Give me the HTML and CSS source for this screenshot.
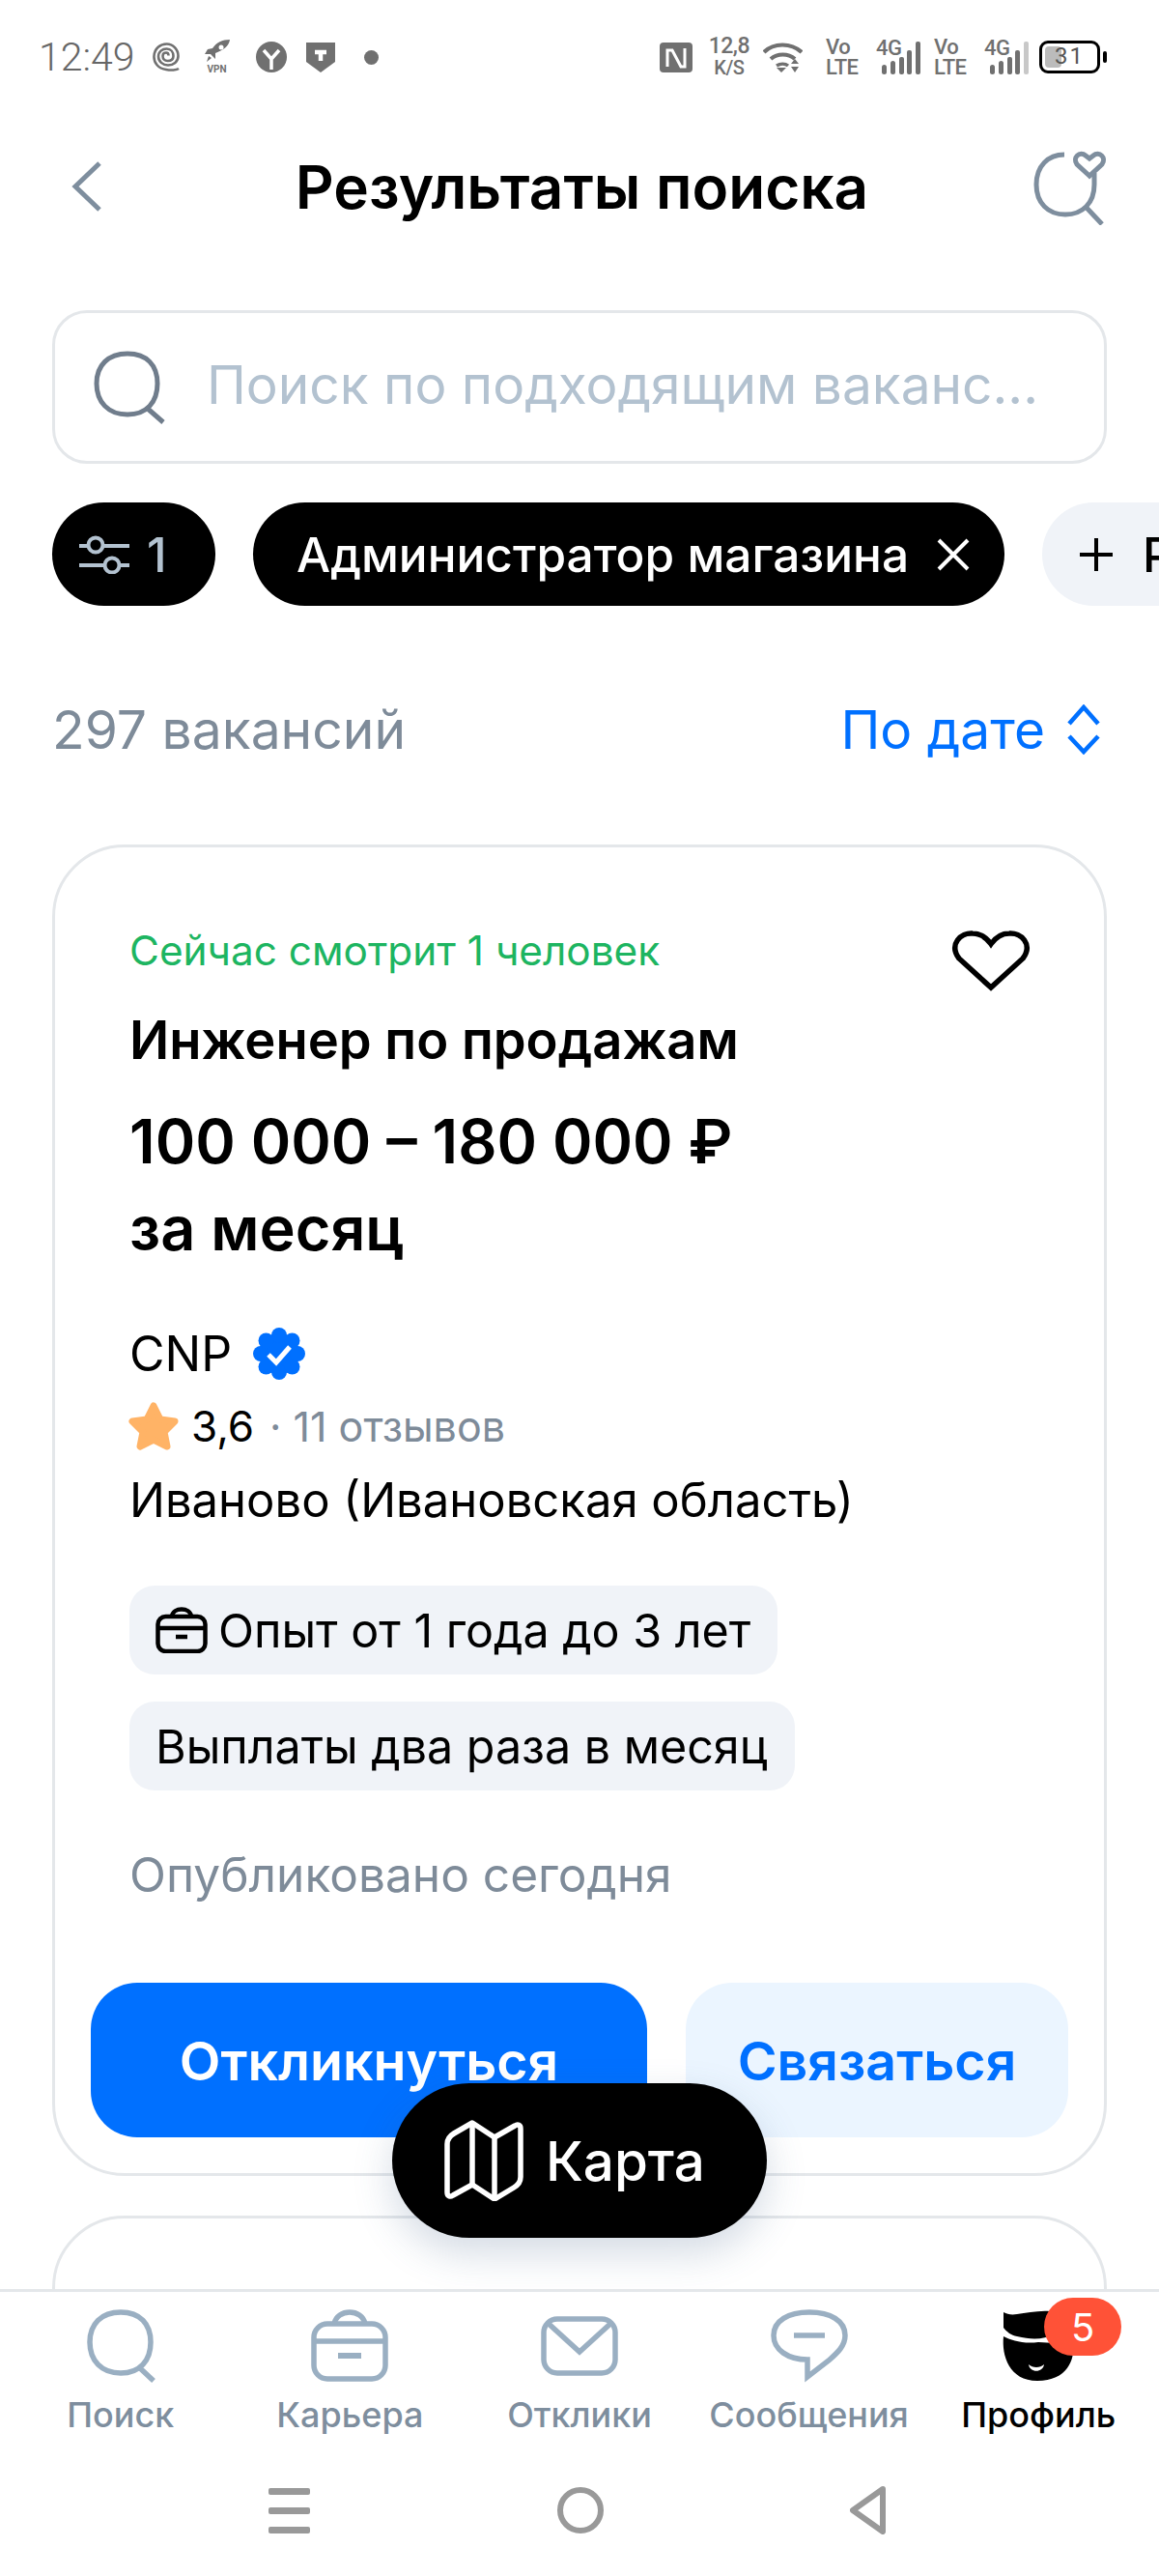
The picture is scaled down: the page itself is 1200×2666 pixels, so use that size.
FILE: index.html
```html
<!DOCTYPE html>
<html lang="ru">
<head>
<meta charset="utf-8">
<title>Результаты поиска</title>
<link rel="stylesheet" href="styles.css">
</head>
<body>
<div class="app">
  <div class="statusbar">
    <div class="st-left">
      <span class="time">12:49</span>
      <svg class="i-swirl" width="28" height="30" viewBox="0 0 28 30" fill="none" stroke="#707070" stroke-width="2.6"><path d="M27 27c-2 1.500-8 2-13 1C6 27 1 21 1.500 14 2 6 8 1.500 14.500 1.500 21 1.500 26.500 7 26.500 14c0 6-5 9.500-10.500 9.500S6 19.500 6 14.500 10 6.500 14.500 6.500s7 3.500 7 7.500-3 5-6 5-5-2-5-5 2-3.500 3.500-3.500 2.500 1 2.500 3"/></svg>
      <span class="vpn">
        <svg width="26" height="24" viewBox="0 0 26 24"><path d="M26 0C18 0 12 3 8 9l-5 1-3 5 6 0 5 5 0-6C19 11 25 7 26 0z" fill="#707070"/><circle cx="17" cy="8" r="2.500" fill="#fff"/><path d="M4 17l3 2-5 4z" fill="#707070"/></svg>
        <span class="vpn-t">VPN</span>
      </span>
      <svg width="32" height="32" viewBox="0 0 32 32"><circle cx="16" cy="16" r="16" fill="#707070"/><path d="M8 9l8 9 8-9M16 18v11" fill="none" stroke="#fff" stroke-width="3.500"/></svg>
      <svg width="30" height="32" viewBox="0 0 30 32"><path d="M0 1h30v20L15 32 0 21z" fill="#707070"/><path d="M9 11h12M15 11v9" stroke="#fff" stroke-width="4.500" fill="none"/></svg>
      <span class="dot"></span>
    </div>
    <div class="st-right">
      <svg width="34" height="31" viewBox="0 0 34 31"><rect width="34" height="31" rx="4" fill="#707070"/><path d="M8 25V8h5l9 17h4V6" fill="none" stroke="#fff" stroke-width="3"/></svg>
      <span class="speed"><b>12,8</b><b class="s2">K/S</b></span>
      <svg class="i-wifi" width="41" height="32" viewBox="0 0 41 32" fill="none" stroke="#707070" stroke-width="4.200"><path d="M1 11C11 1 29 1 40 11M8 18c7-6 18-6 25 0"/><path d="M14 25c4-2.500 9-2.500 12 0" stroke-width="3.500"/><path d="M14 27h10l-5 5zM29 23l4-5 4 5zM29 26h8l-4 6z" fill="#707070" stroke="none"/></svg>
      <span class="volte"><b>Vo</b><b>LTE</b></span>
      <span class="net"><b class="g4">4G</b>
        <svg width="40" height="36" viewBox="0 0 40 36" fill="#707070"><rect x="0" y="24" width="5" height="10" rx="2.500"/><rect x="9" y="20" width="5" height="14" rx="2.500"/><rect x="18" y="16" width="5" height="18" rx="2"/><rect x="26" y="9" width="5" height="25" rx="2"/><rect x="35" y="0" width="5" height="34" rx="2"/></svg>
      </span>
      <span class="volte v2"><b>Vo</b><b>LTE</b></span>
      <span class="net"><b class="g4">4G</b>
        <svg width="40" height="36" viewBox="0 0 40 36" fill="#707070"><rect x="0" y="24" width="5" height="10" rx="2.500"/><rect x="9" y="20" width="5" height="14" rx="2.500"/><rect x="18" y="16" width="5" height="18" rx="2"/><rect x="26" y="9" width="5" height="25" rx="2"/><rect x="35" y="0" width="5" height="34" rx="2" fill="#c8c8c8"/></svg>
      </span>
      <span class="battery"><span class="batt-fill"></span><span class="batt-t">31</span></span>
      <span class="batt-nub"></span>
    </div>
  </div>

  <header class="header">
    <svg class="h-back" width="34" height="54" viewBox="0 0 34 54" fill="none" stroke="#7e8e9e" stroke-width="5"><path d="M30 3L5 27l25 24"/></svg>
    <h1 class="h-title">Результаты поиска</h1>
    <svg class="h-fav" width="80" height="80" viewBox="0 0 80 80" fill="none" stroke="#7e8e9e" stroke-width="5"><path d="M34 7C17 7 5 19 5 38s12 31 30 31 30-12 30-31V26"/><path d="M57 62l16 17"/><path d="M60 29L47 17c-5-7 3-14 9-9l4 3 4-3c6-5 14 2 9 9z" stroke-width="5"/></svg>
  </header>

  <div class="scroll">
    <div class="search">
      <svg width="76" height="76" viewBox="0 0 76 76" fill="none" stroke="#707d8c" stroke-width="5"><path d="M35 3c20 0 31 12 31 31S55 66 35 66 3 53 3 34 15 3 35 3z"/><path d="M56 60l16 14"/></svg>
      <span class="search-ph">Поиск по подходящим ваканс...</span>
    </div>

    <div class="chips">
      <div class="chip chip-dark chip-filter">
        <svg width="52" height="40" viewBox="0 0 52 40" fill="none" stroke="#b3c2d0" stroke-width="4"><path d="M0 11h9M25 11h27M0 31h26M42 31h10"/><circle cx="17" cy="10" r="7.500"/><circle cx="34" cy="31" r="7.500"/></svg>
        <span>1</span>
      </div>
      <div class="chip chip-dark chip-role">
        <span>Администратор магазина</span>
        <svg width="34" height="34" viewBox="0 0 34 34" fill="none" stroke="#fff" stroke-width="4"><path d="M2 2l30 30M32 2L2 32"/></svg>
      </div>
      <div class="chip chip-light">
        <svg width="36" height="36" viewBox="0 0 36 36" fill="none" stroke="#000" stroke-width="4"><path d="M18 1v34M1 18h34"/></svg>
        <span>Регион</span>
      </div>
    </div>

    <div class="meta">
      <span class="count">297 вакансий</span>
      <span class="sort">По дате
        <svg width="36" height="52" viewBox="0 0 36 52" fill="none" stroke="#0070ff" stroke-width="4.500"><path d="M3 20L18 3l15 17M3 33l15 16 15-16"/></svg>
      </span>
    </div>

    <article class="card">
      <div class="viewers">Сейчас смотрит 1 человек</div>
      <svg class="fav" width="82" height="64" viewBox="0 0 82 64" fill="none" stroke="#000" stroke-width="5.500"><path d="M41 60L8 30C-3 15 10 3 22 4c8 0 14 4 19 11C46 8 52 4 60 4c12-1 25 11 14 26z"/></svg>
      <h2 class="job">Инженер по продажам</h2>
      <div class="salary">100 000 – 180 000 ₽<br>за месяц</div>
      <div class="company">CNP
        <svg width="54" height="54" viewBox="0 0 54 54"><g fill="#0070ff"><circle cx="27" cy="27" r="21"/><circle cx="27" cy="8" r="8"/><circle cx="27" cy="46" r="8"/><circle cx="8" cy="27" r="8"/><circle cx="46" cy="27" r="8"/><circle cx="13.500" cy="13.500" r="8"/><circle cx="40.500" cy="13.500" r="8"/><circle cx="13.500" cy="40.500" r="8"/><circle cx="40.500" cy="40.500" r="8"/></g><path d="M16 28l8 8 14-16" fill="none" stroke="#fff" stroke-width="5"/></svg>
      </div>
      <div class="rating">
        <svg width="54" height="52" viewBox="0 0 54 52"><path d="M27 5l7 14 15 2-11 11 3 15-14-7-14 7 3-15L5 21l15-2z" fill="#ffb366" stroke="#ffb366" stroke-width="7" stroke-linejoin="round"/></svg>
        <span class="score">3,6</span>
        <span class="reviews">· 11 отзывов</span>
      </div>
      <div class="city">Иваново (Ивановская область)</div>
      <div class="tags">
        <div class="tag">
          <svg width="54" height="48" viewBox="0 0 54 48" fill="none" stroke="#000" stroke-width="4.500"><path d="M17 10c1-10 19-10 20 0"/><rect x="2.500" y="10" width="49" height="36" rx="8"/><path d="M2.500 22h49M21 31h12"/></svg>
          <span>Опыт от 1 года до 3 лет</span>
        </div>
        <div class="tag">Выплаты два раза в месяц</div>
      </div>
      <div class="published">Опубликовано сегодня</div>
      <div class="actions">
        <div class="btn btn-primary">Откликнуться</div>
        <div class="btn btn-soft">Связаться</div>
      </div>
    </article>
    <article class="card card-next"></article>

    <div class="map-pill">
      <svg width="82" height="84" viewBox="0 0 82 84" fill="none" stroke="#fff" stroke-width="5.500" stroke-linejoin="round"><path d="M29 3L10 14C5 17 3 20 3 25v50c0 4 3 5 6 3l20-11 23 15 20-12c5-3 7-6 7-11V9c0-4-3-5-6-3L52 18z"/><path d="M29 3v64M52 18v64"/></svg>
      <span>Карта</span>
    </div>
  </div>

  <nav class="tabbar">
    <div class="tab">
      <svg width="80" height="76" viewBox="0 0 80 76" fill="none" stroke="#9aafc2" stroke-width="5.500"><path d="M40 3c20 0 31 12 31 31S60 66 40 66 8 53 8 34 20 3 40 3z"/><path d="M59 60l15 14"/></svg>
      <span>Поиск</span>
    </div>
    <div class="tab">
      <svg width="80" height="76" viewBox="0 0 80 76" fill="none" stroke="#9aafc2" stroke-width="5.500"><path d="M24 15c3-16 29-16 32 0"/><rect x="3" y="15" width="74" height="57" rx="14"/><path d="M3 33h74"/><path d="M28 48h24" stroke-width="6"/></svg>
      <span>Карьера</span>
    </div>
    <div class="tab">
      <svg width="80" height="76" viewBox="0 0 80 76" fill="none" stroke="#9aafc2" stroke-width="5.500"><rect x="3" y="10" width="74" height="56" rx="14"/><path d="M7 14l33 30 33-30"/></svg>
      <span>Отклики</span>
    </div>
    <div class="tab">
      <svg width="80" height="76" viewBox="0 0 80 76" fill="none" stroke="#9aafc2" stroke-width="5.500"><path d="M40 3c22 0 37 9 37 24 0 11-8 18-17 26L38 70V52C18 52 3 42 3 27 3 12 18 3 40 3z"/><path d="M24 27h32"/></svg>
      <span>Сообщения</span>
    </div>
    <div class="tab tab-active">
      <span class="tab-ico">
        <svg width="80" height="76" viewBox="0 0 80 76"><path d="M4 3c4 2 8 3 14 2 10-1 22-4 34-3L56 26c-10 5-22 6-38 2-6-1-11-5-14-9z" fill="#000"/><path d="M4 28c8 4 20 8 36 6l36 2c2 16-6 38-37 38C10 74 2 48 4 28z" fill="#000"/><path d="M30 57c1 9 15 9 16 0-4 4-12 4-16 0z" fill="#fff"/></svg>
        <span class="badge">5</span>
      </span>
      <span>Профиль</span>
    </div>
  </nav>

  <div class="navbar">
    <span class="nav-menu"><i></i><i></i><i></i></span>
    <span class="nav-home"></span>
    <svg width="38" height="50" viewBox="0 0 38 50" fill="none" stroke="#999" stroke-width="6" stroke-linejoin="round"><path d="M34 3L3 25l31 22z"/></svg>
  </div>
</div>
</body>
</html>
```

FILE: styles.css
```css
* { box-sizing: border-box; }
html, body { margin: 0; padding: 0; background: #fff; }
body { font-family: Inter, "Liberation Sans", sans-serif; color: #000; }
.app { width: 1200px; height: 2666px; display: flex; flex-direction: column; overflow: hidden; }

.statusbar { height: 118px; flex: none; display: flex; justify-content: space-between; align-items: center; padding: 0 54px 0 40px; color: #707070; font-family: Roboto, sans-serif; }
.st-left, .st-right { display: flex; align-items: center; }
.time { font-size: 41px; font-weight: 300; margin-right: 18px; color: #666; }
.st-left > svg { margin-right: 20px; }
.st-left .i-swirl { margin-right: 26px; }
.vpn { display: flex; flex-direction: column; align-items: center; margin-right: 27px; }
.vpn-t { font-size: 10px; font-weight: 700; line-height: 10px; margin-top: 2px; }
.dot { width: 15px; height: 15px; border-radius: 50%; background: #707070; margin-left: 10px; }
.st-right b { font-weight: 500; display: block; }
.speed { margin-left: 17px; margin-right: 14px; text-align: center; line-height: 20px; font-size: 23px; letter-spacing: -0.5px; }
.speed .s2 { font-size: 20px; margin-top: 2px; }
.volte { margin-left: 24px; font-size: 22px; line-height: 20px; width: 32px; letter-spacing: -0.5px; }
.volte b + b { margin-top: 1px; }
.v2 { margin-left: 14px; }
.net { position: relative; width: 46px; height: 40px; margin-left: 20px; }
.net svg { position: absolute; left: 6px; top: 4px; }
.g4 { position: absolute; left: 0; top: 0; font-size: 22px; line-height: 22px; letter-spacing: -0.5px; }
.battery { position: relative; width: 63px; height: 34px; margin-left: 11px; border: 3px solid #000; border-radius: 9px; font-size: 24px; color: #555; }
.batt-fill { position: absolute; left: 3px; top: 3px; bottom: 3px; width: 17px; background: #bbb; border-radius: 4px; }
.batt-t { position: absolute; left: 13px; top: -1px; line-height: 28px; letter-spacing: 2px; font-weight: 400; }
.batt-nub { width: 4px; height: 12px; background: #000; border-radius: 2px; margin-left: 3px; }

.header { height: 150px; flex: none; display: flex; align-items: center; justify-content: space-between; padding: 0 52px 0 73px; }
.h-title { margin: 0 0 0 30px; font-size: 62px; font-weight: 600; }

.scroll { position: relative; flex: 1; min-height: 0; overflow: hidden; padding: 53px 54px 0; border-bottom: 3px solid #e4e7ea; }
.search { display: flex; align-items: center; height: 159px; border: 3px solid #e4e7ea; border-radius: 36px; padding: 0 40px; gap: 41px; }
.search-ph { font-size: 55px; color: #b3c2d0; white-space: nowrap; padding-bottom: 6px; }

.chips { display: flex; gap: 39px; margin-top: 40px; width: 1200px; }
.chip { height: 107px; flex: none; display: flex; align-items: center; border-radius: 54px; font-size: 49.6px; font-weight: 500; white-space: nowrap; }
.chip-dark { background: #000; color: #fff; }
.chip-filter { width: 169px; padding-left: 28px; gap: 18px; color: #b3c2d0; }
.chip-role { width: 778px; padding: 0 36px 0 45px; justify-content: space-between; }
.chip-light { background: #f0f3f8; color: #000; padding: 0 36px 0 38px; gap: 30px; }

.meta { display: flex; justify-content: space-between; align-items: center; margin-top: 96px; height: 64px; }
.count { font-size: 55.2px; color: #7e8b99; }
.sort { display: flex; align-items: center; gap: 22px; font-size: 55px; color: #0070ff; padding-right: 6px; }

.card { position: relative; border: 3px solid #e4e7ea; border-radius: 75px; padding: 80px 77px 0; height: 1378px; margin-top: 87px; }
.card-next { margin-top: 41px; height: 300px; }
.viewers { font-size: 42.3px; line-height: 54px; color: #1db561; }
.fav { position: absolute; right: 76px; top: 85px; }
.job { margin: 32px 0 0; font-size: 54.3px; line-height: 66px; font-weight: 600; }
.salary { margin-top: 27px; font-size: 63px; line-height: 90px; font-weight: 600; }
.company { display: flex; align-items: center; gap: 22px; margin-top: 50px; font-size: 50px; line-height: 70px; }
.rating { display: flex; align-items: center; margin-top: 8px; height: 64px; font-size: 44px; }
.rating svg { margin-right: 12px; margin-left: -2px; }
.score { margin-right: 16px; }
.reviews { color: #7e8b99; font-size: 43px; }
.city { margin-top: 12px; font-size: 49px; line-height: 66px; }
.tags { display: flex; flex-direction: column; align-items: flex-start; gap: 28px; margin-top: 55px; }
.tag { height: 92px; display: flex; align-items: center; gap: 11px; padding: 0 28px 0 27px; background: #f0f3f8; border-radius: 26px; font-size: 48.4px; }
.published { margin-top: 54px; font-size: 49.6px; line-height: 66px; color: #7e8b99; }
.actions { display: flex; gap: 40px; margin: 79px -40px 0; }
.btn { height: 160px; display: flex; align-items: center; justify-content: center; border-radius: 48px; font-size: 55.5px; font-weight: 600; }
.btn-primary { width: 576px; background: #0070ff; color: #fff; }
.btn-soft { flex: 1; background: #ebf5ff; color: #0070ff; }

.map-pill { position: absolute; left: 406px; top: 1888px; width: 388px; height: 160px; display: flex; align-items: center; gap: 23px; padding-left: 54px; background: #000; color: #fff; border-radius: 80px; font-size: 56.5px; font-weight: 500; box-shadow: 0 16px 40px rgba(60, 90, 130, 0.22); }

.tabbar { flex: none; height: 158px; display: grid; grid-template-columns: repeat(5, 1fr); padding: 18px 6px 0; }
.tab { display: flex; flex-direction: column; align-items: center; font-size: 36px; font-weight: 500; color: #7e8e9e; white-space: nowrap; }
.tab > span:last-child { margin-top: 11px; line-height: 44px; }
.tab-active { color: #000; }
.tab-ico { position: relative; display: block; height: 76px; }
.badge { position: absolute; left: 46px; top: -12px; width: 80px; height: 60px; border-radius: 30px; background: #ff5237; color: #fff; font-size: 40px; font-weight: 400; display: flex; align-items: center; justify-content: center; }

.navbar { flex: none; height: 136px; display: flex; align-items: center; justify-content: space-between; padding: 0 282px 0 278px; }
.nav-menu { display: flex; flex-direction: column; gap: 13px; }
.nav-menu i { display: block; width: 43px; height: 7px; background: #999; border-radius: 2px; }
.nav-home { width: 48px; height: 48px; border: 6px solid #999; border-radius: 50%; }
```
